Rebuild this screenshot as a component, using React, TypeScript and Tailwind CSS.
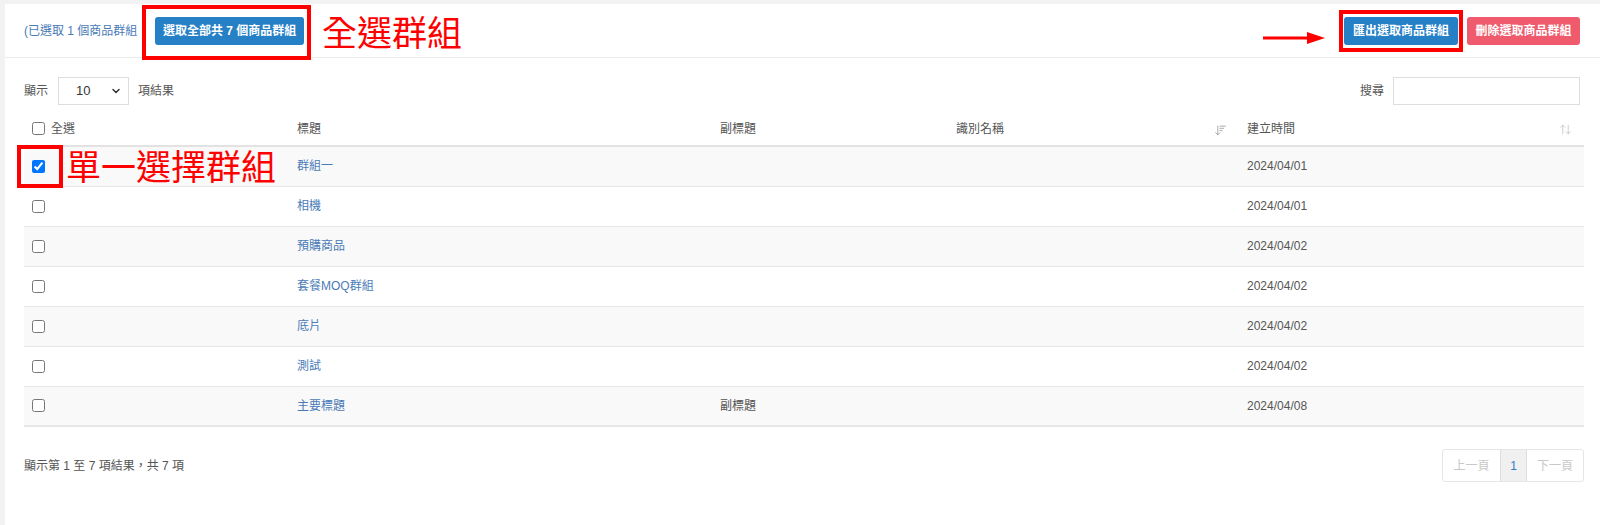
import React from "react";
import { ChevronDown, ArrowDownWideNarrow, ArrowUpDown } from "lucide-react";

const rows = [
  { title: "群組一", sub: "", date: "2024/04/01", checked: true },
  { title: "相機", sub: "", date: "2024/04/01", checked: false },
  { title: "預購商品", sub: "", date: "2024/04/02", checked: false },
  { title: "套餐MOQ群組", sub: "", date: "2024/04/02", checked: false },
  { title: "底片", sub: "", date: "2024/04/02", checked: false },
  { title: "測試", sub: "", date: "2024/04/02", checked: false },
  { title: "主要標題", sub: "副標題", date: "2024/04/08", checked: false },
];

const font = { fontFamily: '"Liberation Sans", "Noto Sans CJK TC", sans-serif' };

export default function App() {
  return (
    <div className="min-h-[525px] bg-[#f2f2f2] pl-[5px] pt-[4px]" style={font}>
      <div className="relative min-h-[521px] bg-white text-[12px] text-[#555]">
        {/* top bar */}
        <div className="flex h-[54px] items-center justify-between border-b border-[#ececec] pl-[19px] pr-[20px]">
          <div className="flex items-center">
            <div className="w-[131px] overflow-visible whitespace-nowrap text-[#4a7bb7]">(已選取 1 個商品群組</div>
            <button className="h-[28px] rounded-[3px] bg-[#2580c6] px-[8px] text-[12px] font-bold text-white">
              選取全部共 7 個商品群組
            </button>
          </div>
          <div className="flex items-center gap-[9px]">
            <button className="h-[28px] w-[114px] rounded-[3px] bg-[#2580c6] text-[12px] font-bold text-white">
              匯出選取商品群組
            </button>
            <button className="h-[28px] w-[113px] rounded-[3px] bg-[#ef5b6c] text-[12px] font-bold text-white">
              刪除選取商品群組
            </button>
          </div>
        </div>

        <div className="pl-[19px] pr-[16px] pt-[19px]">
          {/* controls */}
          <div className="flex h-[28px] items-center justify-between pr-[4px]">
            <div className="flex items-center">
              <span>顯示</span>
              <div className="ml-[10px] flex h-[28px] w-[71px] items-center justify-between border border-[#ddd] pl-[17px] pr-[6px] text-[13px] text-[#333]">
                <span>10</span>
                <ChevronDown size={12} strokeWidth={3} className="text-[#333]" />
              </div>
              <span className="ml-[9px]">項結果</span>
            </div>
            <div className="flex items-center">
              <span className="mr-[9px]">搜尋</span>
              <div className="h-[28px] w-[187px] border border-[#ddd]" />
            </div>
          </div>

          {/* table */}
          <table className="mt-[7px] w-full table-fixed border-collapse">
            <colgroup>
              <col className="w-[265px]" />
              <col className="w-[423px]" />
              <col className="w-[236px]" />
              <col className="w-[291px]" />
              <col />
            </colgroup>
            <thead>
              <tr className="border-b-2 border-[#e2e2e2]">
                <th className="h-[34px] px-[8px] text-left font-normal">
                  <div className="flex items-center">
                    <input type="checkbox" className="m-0 h-[13px] w-[13px]" readOnly />
                    <span className="ml-[6px]">全選</span>
                  </div>
                </th>
                <th className="px-[8px] text-left font-normal">標題</th>
                <th className="px-[8px] text-left font-normal">副標題</th>
                <th className="px-[8px] text-left font-normal">
                  <div className="flex items-center justify-between">
                    <span>識別名稱</span>
                    <ArrowDownWideNarrow size={13} strokeWidth={1.5} className="mr-[4px] mt-[4px] text-[#999]" />
                  </div>
                </th>
                <th className="px-[8px] text-left font-normal">
                  <div className="flex items-center justify-between">
                    <span>建立時間</span>
                    <ArrowUpDown size={13} strokeWidth={1.5} className="mr-[4px] mt-[2px] text-[#c4c4c4]" />
                  </div>
                </th>
              </tr>
            </thead>
            <tbody>
              {rows.map((r, i) => (
                <tr
                  key={i}
                  className={`${i % 2 === 0 ? "bg-[#f9f9f9]" : "bg-white"} ${i > 0 ? "border-t border-[#e6e6e6]" : ""} ${i === rows.length - 1 ? "border-b-2 border-b-[#e6e6e6]" : ""}`}
                >
                  <td className="h-[40px] px-[8px]">
                    <input type="checkbox" className="m-0 block h-[13px] w-[13px]" defaultChecked={r.checked} />
                  </td>
                  <td className="px-[8px] text-[#4a7bb7]">{r.title}</td>
                  <td className="px-[8px]">{r.sub}</td>
                  <td className="px-[8px]"></td>
                  <td className="px-[8px]">{r.date}</td>
                </tr>
              ))}
            </tbody>
          </table>

          {/* footer */}
          <div className="mt-[22px] flex h-[33px] items-center justify-between">
            <span>顯示第 1 至 7 項結果，共 7 項</span>
            <div className="flex h-[33px] overflow-hidden rounded-[3px] border border-[#e6e6e6] text-[12px]">
              <div className="flex w-[57px] items-center justify-center text-[#c8c8c8]">上一頁</div>
              <div className="flex w-[27px] items-center justify-center border-x border-[#ddd] bg-[#f0f0f0] text-[#2a7fc4]">1</div>
              <div className="flex w-[56px] items-center justify-center text-[#c8c8c8]">下一頁</div>
            </div>
          </div>
        </div>

        {/* annotations */}
        <div className="pointer-events-none absolute left-[137px] top-[1px] h-[55px] w-[169px] border-[4px] border-[#ff0000]" />
        <div className="pointer-events-none absolute left-[317px] top-[12px] whitespace-nowrap text-[35px] leading-none text-[#ff0000]">
          全選群組
        </div>
        <svg className="absolute left-[1258px] top-[26px]" width="62" height="16" viewBox="0 0 62 16">
          <line x1="0" y1="8" x2="48" y2="8" stroke="#ff0000" strokeWidth="3" />
          <polygon points="44,2 62,8 44,14" fill="#ff0000" />
        </svg>
        <div className="pointer-events-none absolute left-[1334px] top-[6px] h-[42px] w-[124px] border-[4px] border-[#ff0000]" />
        <div className="pointer-events-none absolute left-[12px] top-[141px] h-[43px] w-[46px] border-[4px] border-[#ff0000]" />
        <div className="pointer-events-none absolute left-[61px] top-[146px] whitespace-nowrap text-[35px] leading-none text-[#ff0000]">
          單一選擇群組
        </div>
      </div>
    </div>
  );
}
